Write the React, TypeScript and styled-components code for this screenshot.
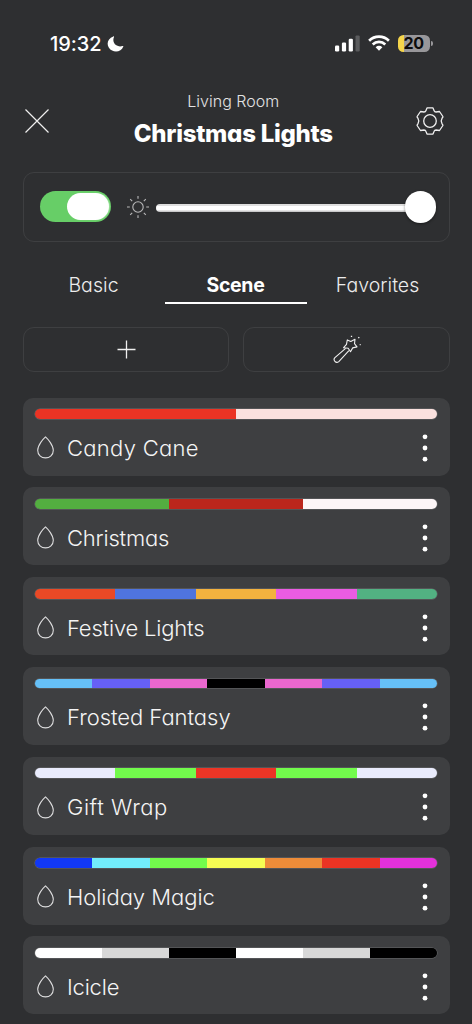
import React from "react";
import styled, { createGlobalStyle } from "styled-components";

const GlobalStyle = createGlobalStyle`
  * { box-sizing: border-box; }
  body {
    margin: 0;
    background: #2e2f31;
    color: #f4f4f4;
    font-family: Inter, "Liberation Sans", sans-serif;
    font-feature-settings: "cv11" 1;
    overflow: hidden;
  }
  svg { display: block; flex: none; }
`;

const Screen = styled.main`
  width: 472px;
  height: 1024px;
  padding: 0 22.5px;
  overflow: hidden;
  background: #2e2f31;
`;

const StatusBar = styled.div`
  height: 87px;
  padding: 0 17px 0 27.5px;
  display: flex;
  align-items: center;
  justify-content: space-between;
`;

const Clock = styled.div`
  display: flex;
  align-items: center;
  gap: 5px;
  font-size: 20px;
  font-weight: 550;
  letter-spacing: -0.05px;
  color: #fff;
`;

const Indicators = styled.div`
  display: flex;
  align-items: center;
  gap: 8px;
`;

const Battery = styled.div`
  position: relative;
  width: 32px;
  height: 17px;
  margin-right: 3px;
  border-radius: 5.5px;
  background: linear-gradient(90deg, #f5d54b 0 6.5px, #98979a 6.5px);
  color: #0c0c0c;
  font-size: 16px;
  font-weight: 650;
  letter-spacing: -0.4px;
  line-height: 17.5px;
  text-align: center;
  &::after {
    content: "";
    position: absolute;
    left: 33px;
    top: 6px;
    width: 2px;
    height: 5px;
    border-radius: 0 2px 2px 0;
    background: #98979a;
  }
`;

const Header = styled.header`
  height: 85px;
  display: flex;
  justify-content: space-between;
  align-items: flex-start;
  padding: 0 5.5px 0 2px;
`;

const IconButton = styled.button<{ $top: number }>`
  border: 0;
  padding: 0;
  margin-top: ${(p) => p.$top}px;
  background: none;
  color: #efefef;
`;

const Titles = styled.div`
  text-align: center;
  padding: 4px 0 0 2px;
`;

const Room = styled.div`
  font-size: 16px;
  font-weight: 300;
  line-height: 20px;
  color: #e2e2e3;
`;

const Title = styled.h1`
  margin: 8px 0 0;
  font-size: 24px;
  font-weight: 800;
  line-height: 30px;
  letter-spacing: -0.26px;
  color: #fff;
  white-space: nowrap;
`;

const PowerPanel = styled.section`
  height: 69.5px;
  border: 1.2px solid #3e3f41;
  border-radius: 11px;
  display: flex;
  align-items: center;
  padding: 0 12.5px 0 16.5px;
`;

const Toggle = styled.div`
  width: 71px;
  height: 31px;
  border-radius: 16px;
  background: #67ce67;
  padding: 2px;
  display: flex;
  justify-content: flex-end;
`;

const ToggleKnob = styled.div`
  width: 42.5px;
  height: 27px;
  border-radius: 14px;
  background: #fff;
  box-shadow: 1px 0 1px rgba(255, 255, 255, 0.35);
`;

const Slider = styled.div`
  flex: 1;
  display: flex;
  align-items: center;
  margin-left: 6px;
`;

const SunSlot = styled.span`
  margin: 0 6px 0 9px;
`;

const Track = styled.div`
  flex: 1;
  height: 8px;
  margin-top: 2px;
  border-radius: 4px 0 0 4px;
  background: linear-gradient(#dfdfdf 0 1.6px, #fff 2px 6px, #c8c8c9 7px);
`;

const SliderKnob = styled.div`
  width: 31.5px;
  height: 31.5px;
  margin-left: -2px;
  border-radius: 50%;
  background: #fff;
  box-shadow: 0 1px 3px rgba(0, 0, 0, 0.45);
`;

const Tabs = styled.nav`
  display: grid;
  grid-template-columns: repeat(3, 142px);
  margin-top: 22.5px;
  height: 40px;
`;

const Tab = styled.div<{ $active?: boolean }>`
  height: 40px;
  padding-top: 8px;
  text-align: center;
  font-size: 19.5px;
  line-height: 26px;
  font-weight: ${(p) => (p.$active ? 700 : 300)};
  letter-spacing: ${(p) => (p.$active ? -0.35 : 0.05)}px;
  color: ${(p) => (p.$active ? "#fff" : "#ececec")};
  border-bottom: 2.4px solid ${(p) => (p.$active ? "#fff" : "transparent")};
`;

const Actions = styled.div`
  display: grid;
  grid-template-columns: 1fr 1fr;
  gap: 14px;
  margin-top: 23px;
`;

const Action = styled.button`
  height: 45px;
  padding: 0 0 0.5px 0.5px;
  border: 1.2px solid #3e3f41;
  border-radius: 11px;
  background: none;
  color: #f0f0f0;
  display: flex;
  align-items: center;
  justify-content: center;
`;

const SceneList = styled.ul`
  list-style: none;
  margin: 25.7px 0 0;
  padding: 0;
  display: flex;
  flex-direction: column;
  gap: 11.8px;
`;

const SceneCard = styled.li`
  height: 78px;
  flex: none;
  padding: 11.5px 12.3px 0 12px;
  border-radius: 10px;
  background: #3e3f41;
`;

const Palette = styled.div`
  height: 9.8px;
  display: flex;
  border-radius: 5px;
  overflow: hidden;
  box-shadow: 0 0 0 0.5px #6b6c6e;
`;

const Swatch = styled.span<{ $color: string }>`
  flex: 1;
  background: ${(p) => p.$color};
`;

const SceneRow = styled.div`
  height: 58px;
  display: flex;
  align-items: center;
  padding: 0 9.7px 0 2px;
`;

const SceneName = styled.span<{ $tracking: number }>`
  flex: 1;
  margin-left: 13.5px;
  font-size: 22px;
  font-weight: 300;
  letter-spacing: ${(p) => p.$tracking}px;
  white-space: nowrap;
`;

const SCENES: { name: string; tracking: number; colors: string[] }[] = [
  { name: "Candy Cane", tracking: 0.28, colors: ["#eb3324", "#fbe1df"] },
  { name: "Christmas", tracking: -0.2, colors: ["#53ae40", "#bb261c", "#fcf5f7"] },
  { name: "Festive Lights", tracking: -0.2, colors: ["#e94926", "#4f74df", "#f3b23f", "#eb5ce3", "#52b182"] },
  { name: "Frosted Fantasy", tracking: -0.04, colors: ["#66c0f7", "#6660f5", "#ea67ce", "#000", "#ea67ce", "#6660f5", "#66c0f7"] },
  { name: "Gift Wrap", tracking: 0.55, colors: ["#e9ebfc", "#72fb4c", "#eb3526", "#72fb4c", "#e9ebfc"] },
  { name: "Holiday Magic", tracking: -0.04, colors: ["#1238f5", "#72edfb", "#72fb4c", "#f5fd53", "#ed8c39", "#eb3323", "#e431db"] },
  { name: "Icicle", tracking: -0.2, colors: ["#fff", "#d8d8d8", "#000", "#fff", "#d8d8d8", "#000"] },
];

const Moon = () => (
  <svg width="17" height="16" viewBox="0 0 17 16" fill="#fff">
    <path d="M6.300.4C.9 2.100-.8 7.700 1.900 11.800c3.600 5.400 12.200 5 14.400-1.200.2-.6-.2-.8-.7-.6-3.400 1.300-7.400-.2-8.700-3.400C6.100 4.700 6.200 2.900 7 1.100 7.200.5 6.800.2 6.300.4Z" />
  </svg>
);

const Signal = () => (
  <svg width="25" height="17" viewBox="0 0 25 17" fill="#fff">
    <rect x="0" y="10.500" width="4.200" height="6" rx="1.200" />
    <rect x="6.900" y="7.500" width="4.200" height="9" rx="1.200" />
    <rect x="13.700" y="3.700" width="4.200" height="12.800" rx="1.200" />
    <rect x="20.500" y="0.400" width="4.200" height="16.100" rx="1.200" fill="#5b5c5e" />
  </svg>
);

const Wifi = () => (
  <svg width="22" height="17" viewBox="0 0 22 17" fill="none" stroke="#fff" strokeWidth="2.700">
    <path d="M1.100 5.700C6.700.3 15.300.3 20.900 5.700" />
    <path d="M4.700 9.500c3.600-3.400 9-3.400 12.600 0" />
    <path d="M7.600 12.200c2-1.800 4.800-1.800 6.800 0L11 15.800Z" fill="#fff" stroke="none" />
  </svg>
);

const Close = () => (
  <svg width="24" height="24" viewBox="0 0 24 24" fill="none" stroke="currentColor" strokeWidth="1.200">
    <path d="M.5.500l23 23M23.500.500l-23 23" />
  </svg>
);

const Gear = () => (
  <svg width="28" height="28" viewBox="0 0 28 28" fill="none" stroke="currentColor" strokeWidth="1.300" strokeLinejoin="round">
    <path d="M11 .9H17L18 3.500Q18.500 5 20 5L23.500 4.500 26.900 9.500Q27 10.300 26 11.300Q24.400 14 26 16.700Q27 17.700 26.900 18.500L23.500 23.500 20 23Q18.500 23 18 24.500L17 27.100H11L10 24.500Q9.500 23 8 23L4.500 23.500 1.100 18.500Q1 17.700 2 16.700Q3.600 14 2 11.300Q1 10.300 1.100 9.500L4.500 4.500 8 5Q9.500 5 10 3.500Z" />
    <circle cx="14" cy="14" r="6.300" />
  </svg>
);

const Sun = () => (
  <svg width="24" height="24" viewBox="0 0 24 24" fill="none" stroke="#b9b9ba" strokeWidth="1.100">
    <circle cx="12" cy="12" r="5.200" />
    <path d="M12 1v2.800M12 20.200V23M1 12h2.800M20.200 12H23M4.200 4.200l2 2M17.800 17.800l2 2M4.200 19.800l2-2M17.800 6.200l2-2" />
  </svg>
);

const Plus = () => (
  <svg width="19" height="19" viewBox="0 0 19 19" fill="none" stroke="currentColor" strokeWidth="1.300">
    <path d="M9.500.5v18M.5 9.500h18" />
  </svg>
);

const Wand = () => (
  <svg width="28" height="28" viewBox="0 0 28 28" fill="none" stroke="currentColor" strokeWidth="1.100" strokeLinejoin="round">
    <path d="M14.300 4.900l3.500 1.500 4.200-2.200-.5 4.500 2.500 3.200-4.300 1-2.200 3.800-2.300-3.500-4.600-.5 2.900-3.300Z" />
    <path d="M12.600 13.400 1.900 22.700c-2.200 2.300.9 6.100 3.900 3.900L15.900 15.700" />
    <path d="M18.500.8v1.100M25.300 3.100l1-.9M26.700 9.700h1" strokeWidth="1.300" />
  </svg>
);

const Drop = () => (
  <svg width="17" height="23" viewBox="0 0 17 23" fill="none" stroke="#dededf" strokeWidth="1.100" strokeLinejoin="round">
    <path d="M8.500.8C6.300 2.700.7 9.400.7 14.300c0 4.600 3.500 7.600 7.800 7.600s7.800-3 7.800-7.600C16.300 9.400 10.700 2.700 8.500.8Z" />
  </svg>
);

const More = () => (
  <svg width="6" height="28" viewBox="0 0 6 28" fill="#fff">
    <circle cx="3" cy="2.800" r="2.400" />
    <circle cx="3" cy="14" r="2.400" />
    <circle cx="3" cy="25.200" r="2.400" />
  </svg>
);

export default function App() {
  return (
    <Screen>
      <GlobalStyle />
      <StatusBar>
        <Clock>
          19:32
          <Moon />
        </Clock>
        <Indicators>
          <Signal />
          <Wifi />
          <Battery>20</Battery>
        </Indicators>
      </StatusBar>
      <Header>
        <IconButton $top={22.4} aria-label="Close"><Close /></IconButton>
        <Titles>
          <Room>Living Room</Room>
          <Title>Christmas Lights</Title>
        </Titles>
        <IconButton $top={20.4} aria-label="Settings"><Gear /></IconButton>
      </Header>
      <PowerPanel>
        <Toggle role="switch" aria-checked="true"><ToggleKnob /></Toggle>
        <Slider>
          <SunSlot><Sun /></SunSlot>
          <Track />
          <SliderKnob />
        </Slider>
      </PowerPanel>
      <Tabs>
        <Tab>Basic</Tab>
        <Tab $active>Scene</Tab>
        <Tab>Favorites</Tab>
      </Tabs>
      <Actions>
        <Action aria-label="Add scene"><Plus /></Action>
        <Action aria-label="Create effect"><Wand /></Action>
      </Actions>
      <SceneList>
        {SCENES.map((scene) => (
          <SceneCard key={scene.name}>
            <Palette>
              {scene.colors.map((color, i) => (
                <Swatch key={i} $color={color} />
              ))}
            </Palette>
            <SceneRow>
              <Drop />
              <SceneName $tracking={scene.tracking}>{scene.name}</SceneName>
              <More />
            </SceneRow>
          </SceneCard>
        ))}
      </SceneList>
    </Screen>
  );
}
